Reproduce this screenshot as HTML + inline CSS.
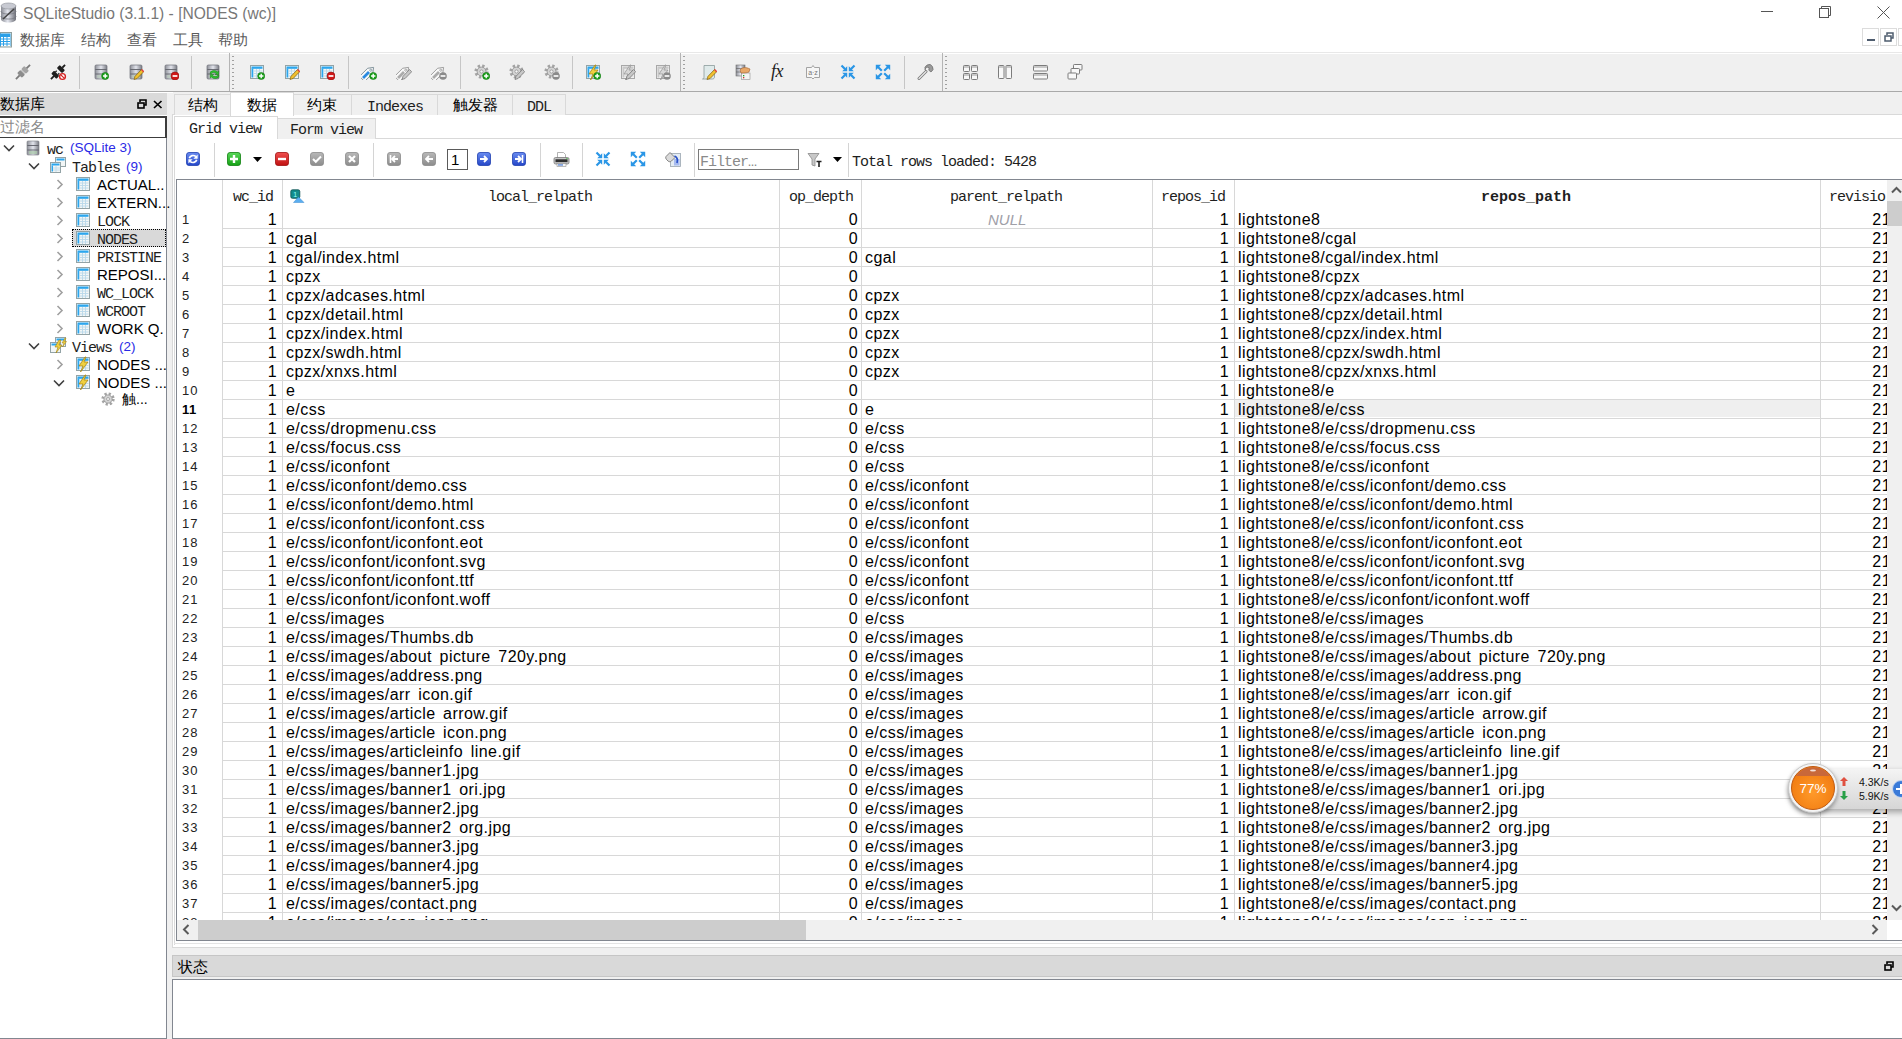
<!DOCTYPE html><html><head><meta charset="utf-8"><title>SQLiteStudio</title><style>
*{margin:0;padding:0;box-sizing:border-box}
html,body{width:1902px;height:1039px;overflow:hidden;background:#fff;position:relative}
body{font-family:"Liberation Sans",sans-serif;color:#000}
.a{position:absolute}
.s{position:absolute;font-family:"Liberation Sans",sans-serif;white-space:pre;line-height:19px}
.d,.r{font-size:16px;letter-spacing:.45px}
.r{width:300px;text-align:right;margin-right:-.45px}
.d i{display:inline-block;width:7.6px}
.m{position:absolute;font-family:"Liberation Mono",monospace;font-size:15px;letter-spacing:-1px;white-space:pre;line-height:19px;color:#1e1e1e}
.hl{position:absolute;height:1px}
.vl{position:absolute;width:1px}
svg{position:absolute;overflow:visible}
</style></head><body><svg width="0" height="0" style="position:absolute;left:0;top:0"><defs>
<linearGradient id="gdb" x1="0" x2="1"><stop offset="0" stop-color="#8e9098"/><stop offset=".5" stop-color="#e2e4ec"/><stop offset="1" stop-color="#7a7c84"/></linearGradient>
<linearGradient id="gbl" x1="0" y1="0" x2="0" y2="1"><stop offset="0" stop-color="#6a8cf0"/><stop offset="1" stop-color="#2446c8"/></linearGradient>
<linearGradient id="ggr" x1="0" y1="0" x2="0" y2="1"><stop offset="0" stop-color="#5ad85a"/><stop offset="1" stop-color="#14a014"/></linearGradient>
<linearGradient id="grd" x1="0" y1="0" x2="0" y2="1"><stop offset="0" stop-color="#f05050"/><stop offset="1" stop-color="#c01010"/></linearGradient>
<linearGradient id="ggy" x1="0" y1="0" x2="0" y2="1"><stop offset="0" stop-color="#b8b8b8"/><stop offset="1" stop-color="#8c8c8c"/></linearGradient>
<symbol id="db" viewBox="0 0 16 16"><rect x="2" y="1" width="12" height="14" rx="1.2" fill="url(#gdb)" stroke="#6e7078" stroke-width=".7"/><path d="M2.3 5.5h11.4M2.3 10h11.4" stroke="#60626a" stroke-width=".9"/><rect x="4" y="11" width="8" height="3" fill="#b6c8b8" opacity=".7"/></symbol>
<symbol id="bplus" viewBox="0 0 16 16"><circle cx="12.2" cy="12" r="3.6" fill="#1aa01a" stroke="#0c700c" stroke-width=".5"/><path d="M12.2 9.8v4.4M10 12h4.4" stroke="#fff" stroke-width="1.4"/></symbol>
<symbol id="bminus" viewBox="0 0 16 16"><circle cx="12" cy="12" r="4" fill="#d01818" stroke="#901010" stroke-width=".6"/><path d="M9.6 12h4.8" stroke="#fff" stroke-width="1.7"/></symbol>
<symbol id="bminusg" viewBox="0 0 16 16"><circle cx="12" cy="12" r="3.8" fill="#8a8a8a"/><path d="M9.6 12h4.8" stroke="#fff" stroke-width="1.6"/></symbol>
<symbol id="bpen" viewBox="0 0 16 16"><path d="M6 15.5l1-3.2 6.5-6.8 2.2 2.2-6.6 6.8z" fill="#f0c030" stroke="#806010" stroke-width=".7"/><path d="M13.5 5.5l2.2 2.2" stroke="#e04040" stroke-width="1.4"/></symbol>
<symbol id="bpeng" viewBox="0 0 16 16"><path d="M6 15.5l1-3.2 6.5-6.8 2.2 2.2-6.6 6.8z" fill="#c8c8c8" stroke="#707070" stroke-width=".7"/></symbol>
<symbol id="tbl" viewBox="0 0 16 16"><rect x="1.5" y="1.5" width="13" height="13" fill="#f2f6f6" stroke="#93a3a6"/><rect x="2.5" y="2.5" width="11" height="2.3" fill="#2ba6ee"/><rect x="2.5" y="4.5" width="1.8" height="9" fill="#2ba6ee"/><path d="M4.5 7h9M4.5 9.5h9M4.5 12h9M7.5 5v9M10.5 5v9" stroke="#b9d8ea" stroke-width=".9"/></symbol>
<symbol id="tblg" viewBox="0 0 16 16"><rect x="1.5" y="1.5" width="13" height="13" fill="#f0f0f0" stroke="#a8a8a8"/><rect x="2.5" y="2.5" width="11" height="2.3" fill="#c8c8c8"/><rect x="2.5" y="4.5" width="1.8" height="9" fill="#c8c8c8"/><path d="M4.5 7h9M4.5 9.5h9M4.5 12h9M7.5 5v9M10.5 5v9" stroke="#d6d6d6" stroke-width=".9"/></symbol>
<symbol id="tag" viewBox="0 0 16 16"><g transform="rotate(-45 8 8)"><path d="M-1.8 4.4h11.5l4.8 3.6-4.8 3.6H-1.8z" fill="#f8f8f8" stroke="#7e9098" stroke-width=".9"/><circle cx="10.6" cy="8" r="1.1" fill="none" stroke="#7e9098" stroke-width=".8"/><rect x="-.4" y="6.6" width="8.4" height="2.8" fill="#2a8ae0"/></g></symbol>
<symbol id="tagg" viewBox="0 0 16 16"><g transform="rotate(-45 8 8)"><path d="M-1.8 4.4h11.5l4.8 3.6-4.8 3.6H-1.8z" fill="#f8f8f8" stroke="#9a9a9a" stroke-width=".9"/><circle cx="10.6" cy="8" r="1.1" fill="none" stroke="#9a9a9a" stroke-width=".8"/><rect x="-.4" y="6.6" width="8.4" height="2.8" fill="#ababab"/></g></symbol>
<symbol id="gear" viewBox="0 0 16 16"><circle cx="7.5" cy="7.5" r="5.6" fill="none" stroke="#a4a4a4" stroke-width="3" stroke-dasharray="2.3 2.1"/><circle cx="7.5" cy="7.5" r="4.4" fill="#d4d4d4" stroke="#8e8e8e" stroke-width=".8"/><circle cx="7.5" cy="7.5" r="1.6" fill="#f6f6f6" stroke="#8a8a8a" stroke-width=".7"/></symbol>
<symbol id="bolt" viewBox="0 0 16 16"><path d="M10 1L4 10h4l-2.5 6L13 6H9l2-5z" fill="#f0d040" stroke="#a08010" stroke-width=".7"/></symbol>
<symbol id="boltg" viewBox="0 0 16 16"><path d="M10 1L4 10h4l-2.5 6L13 6H9l2-5z" fill="#d8d8d8" stroke="#909090" stroke-width=".7"/></symbol>
<symbol id="arrin" viewBox="0 0 16 16"><path d="M1.5 1.5L5 5M14.5 1.5L11 5M1.5 14.5L5 11M14.5 14.5L11 11" stroke="#2a96e6" stroke-width="2.2"/><path d="M7.2 7.2V2.2L2.2 7.2zM8.8 7.2V2.2l5 5zM7.2 8.8v5l-5-5zM8.8 8.8v5l5-5z" fill="#2a96e6"/></symbol>
<symbol id="arrout" viewBox="0 0 16 16"><path d="M3 3L6.8 6.8M13 3L9.2 6.8M3 13L6.8 9.2M13 13L9.2 9.2" stroke="#2a96e6" stroke-width="2.2"/><path d="M.8 .8h5.4L.8 6.2zM15.2 .8H9.8l5.4 5.4zM.8 15.2h5.4L.8 9.8zM15.2 15.2H9.8l5.4-5.4z" fill="#2a96e6"/></symbol>
<symbol id="win" viewBox="0 0 16 16"><rect x=".5" y=".5" width="6.5" height="6" rx=".8" fill="#f8f8f8" stroke="#7c7c7c"/></symbol>
</defs></svg><svg style="left:0px;top:2px" width="17" height="21" viewBox="0 0 17 21"><defs><linearGradient id="cyl" x1="0" x2="1"><stop offset="0" stop-color="#8a8c94"/><stop offset=".45" stop-color="#e4e6ee"/><stop offset="1" stop-color="#6c6e76"/></linearGradient></defs><path d="M1 4v13c0 2 3 3.5 7.5 3.5S16 19 16 17V4z" fill="url(#cyl)"/><ellipse cx="8.5" cy="4" rx="7.5" ry="3" fill="#c8cad2" stroke="#8c8e96" stroke-width=".6"/><path d="M1 9c0 2 3 3 7.5 3S16 11 16 9M1 14c0 2 3 3 7.5 3S16 16 16 14" fill="none" stroke="#777a82" stroke-width=".8"/><path d="M3 17L14 7" stroke="#444" stroke-width="1.6"/></svg><div class="s" style="left:23px;top:4px;font-size:15.6px;color:#777;">SQLiteStudio (3.1.1) - [NODES (wc)]</div><div class="hl" style="left:1761px;top:11px;width:12px;background:#555"></div><svg style="left:1818px;top:5px" width="14" height="14" viewBox="0 0 14 14"><rect x="1.5" y="3.5" width="9" height="9" fill="none" stroke="#555"/><path d="M3.5 3.5V1.5h9v9h-2" fill="none" stroke="#555"/></svg><svg style="left:1876px;top:5px" width="15" height="15" viewBox="0 0 15 15"><path d="M1.5 1.5l12 12M13.5 1.5l-12 12" stroke="#555" stroke-width="1"/></svg><svg style="left:0px;top:32px" width="13" height="16" viewBox="0 0 13 16"><rect x=".5" y=".5" width="11" height="14.5" fill="#e8f0f0" stroke="#8fa0a0"/><rect x="0" y="1.5" width="10.5" height="12.5" fill="#2aa0e8"/><path d="M1 5h2v1.5H1zM4 5h2.5v1.5H4zM7.5 5H10v1.5H7.5zM1 7.5h2V9H1zM4 7.5h2.5V9H4zM7.5 7.5H10V9H7.5zM1 10h2v1.5H1zM4 10h2.5v1.5H4zM7.5 10H10v1.5H7.5zM1 12.5h2V14H1zM4 12.5h2.5V14H4zM7.5 12.5H10V14H7.5z" fill="#fff"/></svg><div class="s" style="left:20px;top:30px;font-size:15px;color:#5a5a5a;">数据库</div><div class="s" style="left:81px;top:30px;font-size:15px;color:#5a5a5a;">结构</div><div class="s" style="left:127px;top:30px;font-size:15px;color:#5a5a5a;">查看</div><div class="s" style="left:173px;top:30px;font-size:15px;color:#5a5a5a;">工具</div><div class="s" style="left:218px;top:30px;font-size:15px;color:#5a5a5a;">帮助</div><div class="a" style="left:1862px;top:28px;width:17px;height:18px;border:1px solid #dcdcdc;background:#fff"></div><div class="a" style="left:1880px;top:28px;width:17px;height:18px;border:1px solid #dcdcdc;background:#fff"></div><div class="a" style="left:1898px;top:28px;width:6px;height:18px;border:1px solid #dcdcdc;background:#fff"></div><div class="a" style="left:1867px;top:39px;width:8px;height:2px;background:#4e5c6e"></div><svg style="left:1884px;top:32px" width="10" height="10" viewBox="0 0 10 10"><rect x="1" y="4" width="6" height="5" fill="none" stroke="#4e5c6e" stroke-width="1.5"/><path d="M3 3V1h6v5H7" fill="none" stroke="#4e5c6e" stroke-width="1.5"/></svg><div class="hl" style="left:0px;top:52px;width:1902px;background:#e8e8e8"></div><div class="a" style="left:0px;top:54px;width:1902px;height:37px;background:#f0f0f0"></div><div class="hl" style="left:0px;top:91px;width:1902px;background:#a9a9a9"></div><div class="vl" style="left:79px;top:56px;height:33px;background:#c6c6c6"></div><div class="vl" style="left:191px;top:56px;height:33px;background:#c6c6c6"></div><div class="vl" style="left:348px;top:56px;height:33px;background:#c6c6c6"></div><div class="vl" style="left:460px;top:56px;height:33px;background:#c6c6c6"></div><div class="vl" style="left:572px;top:56px;height:33px;background:#c6c6c6"></div><div class="vl" style="left:904px;top:56px;height:33px;background:#c6c6c6"></div><div class="vl" style="left:229px;top:53px;height:38px;background:#b4b4b4"></div><div class="a" style="left:232px;top:56px;width:2px;height:33px;background:repeating-linear-gradient(#a0a0a0 0 1px,#f0f0f0 1px 4px)"></div><div class="vl" style="left:680px;top:53px;height:38px;background:#b4b4b4"></div><div class="a" style="left:683px;top:56px;width:2px;height:33px;background:repeating-linear-gradient(#a0a0a0 0 1px,#f0f0f0 1px 4px)"></div><div class="vl" style="left:942px;top:53px;height:38px;background:#b4b4b4"></div><div class="a" style="left:945px;top:56px;width:2px;height:33px;background:repeating-linear-gradient(#a0a0a0 0 1px,#f0f0f0 1px 4px)"></div><svg style="left:15px;top:64px" width="16" height="16" viewBox="0 0 16 16"><g transform="rotate(-45 8 8)"><rect x="-2" y="7.1" width="5.5" height="1.8" fill="#7a7a7a"/><rect x="3" y="4.6" width="4.6" height="6.8" rx="1.2" fill="#8c8c8c"/><rect x="7.6" y="5.4" width="1.2" height="5.2" fill="#c4c4c4"/><rect x="8.8" y="4.6" width="4.4" height="6.8" rx="1.2" fill="#a4a4a4"/><rect x="13" y="7.1" width="5" height="1.8" fill="#7a7a7a"/></g></svg><svg style="left:50px;top:64px" width="16" height="16" viewBox="0 0 16 16"><g transform="rotate(-45 8 8)" fill="#1e1e1e"><rect x="-2" y="7.1" width="4.5" height="1.8"/><rect x="2" y="4.3" width="4.2" height="7.4" rx="1"/><rect x="6" y="5.6" width="2" height="1.2"/><rect x="6" y="9.2" width="2" height="1.2"/><rect x="10" y="4.3" width="4.2" height="7.4" rx="1"/><rect x="14" y="7.1" width="4" height="1.8"/></g><circle cx="12.5" cy="12.5" r="2.9" fill="#fff" stroke="#d42020" stroke-width="1.4"/><path d="M10.6 10.6l3.8 3.8" stroke="#d42020" stroke-width="1.3"/></svg><svg style="left:93px;top:64px" width="16" height="16" viewBox="0 0 16 16"><use href="#db"/><use href="#bplus"/></svg><svg style="left:128px;top:64px" width="16" height="16" viewBox="0 0 16 16"><use href="#db"/><use href="#bpen"/></svg><svg style="left:163px;top:64px" width="16" height="16" viewBox="0 0 16 16"><use href="#db"/><use href="#bminus"/></svg><svg style="left:205px;top:64px" width="16" height="16" viewBox="0 0 16 16"><use href="#db"/><path d="M5 9.5a4 3 0 0 1 7.5-1.5l1.2-1v3.5h-3.5l1.2-1A2.8 2 0 0 0 6.5 9.5z" fill="#30c030" stroke="#108010" stroke-width=".5"/><path d="M14 11.5a4 3 0 0 1-7.5 1.5l-1.2 1v-3.5h3.5l-1.2 1a2.8 2 0 0 0 5 0z" fill="#30c030" stroke="#108010" stroke-width=".5"/></svg><svg style="left:249px;top:64px" width="16" height="16" viewBox="0 0 16 16"><use href="#tbl"/><use href="#bplus"/></svg><svg style="left:284px;top:64px" width="16" height="16" viewBox="0 0 16 16"><use href="#tbl"/><use href="#bpen"/></svg><svg style="left:319px;top:64px" width="16" height="16" viewBox="0 0 16 16"><use href="#tbl"/><use href="#bminus"/></svg><svg style="left:361px;top:64px" width="16" height="16" viewBox="0 0 16 16"><use href="#tag"/><use href="#bplus"/></svg><svg style="left:396px;top:64px" width="16" height="16" viewBox="0 0 16 16"><use href="#tagg"/><use href="#bpeng"/></svg><svg style="left:431px;top:64px" width="16" height="16" viewBox="0 0 16 16"><use href="#tagg"/><use href="#bminusg"/></svg><svg style="left:474px;top:64px" width="16" height="16" viewBox="0 0 16 16"><use href="#gear"/><use href="#bplus"/></svg><svg style="left:509px;top:64px" width="16" height="16" viewBox="0 0 16 16"><use href="#gear"/><use href="#bpeng"/></svg><svg style="left:544px;top:64px" width="16" height="16" viewBox="0 0 16 16"><use href="#gear"/><use href="#bminusg"/></svg><svg style="left:585px;top:64px" width="16" height="16" viewBox="0 0 16 16"><use href="#tbl"/><use href="#bolt"/><use href="#bplus"/></svg><svg style="left:620px;top:64px" width="16" height="16" viewBox="0 0 16 16"><use href="#tblg"/><use href="#boltg"/><use href="#bpeng"/></svg><svg style="left:655px;top:64px" width="16" height="16" viewBox="0 0 16 16"><use href="#tblg"/><use href="#boltg"/><use href="#bminusg"/></svg><svg style="left:701px;top:64px" width="16" height="16" viewBox="0 0 16 16"><path d="M3 1.5h10.5v11.5c0 1.2-.8 2-2 2H1.5c1 0 1.5-.8 1.5-2z" fill="#dfeaea" stroke="#8a9a9a" stroke-width=".8"/><use href="#bpen"/></svg><svg style="left:735px;top:64px" width="16" height="16" viewBox="0 0 16 16"><rect x="1" y="1" width="9" height="11" fill="url(#gdb)" stroke="#707070" stroke-width=".6"/><path d="M1 4.5h9M1 8h9" stroke="#666" stroke-width=".7"/><rect x="6.5" y="9" width="8.5" height="6.5" fill="#f4f4f4" stroke="#909090" stroke-width=".6"/><path d="M5 6c2-3 6-3 10-1l-1 3c-2 1-5 1-8 1z" fill="#e8a868" stroke="#a06030" stroke-width=".6"/><rect x="8" y="11" width="1.3" height="1.3" fill="#20a020"/><rect x="8" y="13" width="1.3" height="1.3" fill="#d03030"/></svg><div class="a" style="left:771px;top:61px;font:italic 18px &quot;Liberation Serif&quot;,serif;color:#222;letter-spacing:-.5px;line-height:20px">fx</div><svg style="left:805px;top:64px" width="16" height="16" viewBox="0 0 16 16"><path d="M1.5 3.5h5l1.5-2 1.5 2h5v10h-5L8 15l-1.5-1.5h-5z" fill="#f6f6f6" stroke="#9a9a9a" stroke-width=".9"/><text x="8" y="11" font-family="Liberation Sans" font-size="7" text-anchor="middle" fill="#777">a·z</text></svg><svg style="left:840px;top:64px" width="16" height="16" viewBox="0 0 16 16"><use href="#arrin"/></svg><svg style="left:875px;top:64px" width="16" height="16" viewBox="0 0 16 16"><use href="#arrout"/></svg><svg style="left:917px;top:64px" width="16" height="16" viewBox="0 0 16 16"><path d="M2 14.5L9 7.5" stroke="#7a7a7a" stroke-width="3" stroke-linecap="round"/><path d="M2 14.5L9 7.5" stroke="#e8e8e8" stroke-width="1.2" stroke-linecap="round"/><path d="M8.5 6.5a4 4 0 1 1 5.5 1.5l-2.2-1.8.3-2.5-2.3-.7-1.8 2.3z" fill="#9a9a9a" stroke="#6a6a6a" stroke-width=".7"/></svg><svg style="left:962px;top:64px" width="16" height="16" viewBox="0 0 16 16"><rect x="1.5" y="1.5" width="6" height="6" rx=".8" fill="#f8f8f8" stroke="#7c7c7c"/><rect x="9.5" y="1.5" width="6" height="6" rx=".8" fill="#f8f8f8" stroke="#7c7c7c"/><rect x="1.5" y="9.5" width="6" height="6" rx=".8" fill="#f8f8f8" stroke="#7c7c7c"/><rect x="9.5" y="9.5" width="6" height="6" rx=".8" fill="#f8f8f8" stroke="#7c7c7c"/><path d="M2 3h5M10 3h5M2 11h5M10 11h5" stroke="#9a9a9a"/></svg><svg style="left:997px;top:64px" width="16" height="16" viewBox="0 0 16 16"><rect x="1.5" y="1.5" width="5.5" height="13" rx=".8" fill="#f8f8f8" stroke="#7c7c7c"/><rect x="9" y="1.5" width="5.5" height="13" rx=".8" fill="#f8f8f8" stroke="#7c7c7c"/><path d="M2 3h4.5M9.5 3H14" stroke="#9a9a9a"/></svg><svg style="left:1032px;top:64px" width="16" height="16" viewBox="0 0 16 16"><rect x="1.5" y="1.5" width="14" height="5.5" rx=".8" fill="#f8f8f8" stroke="#7c7c7c"/><rect x="1.5" y="9.5" width="14" height="5.5" rx=".8" fill="#f8f8f8" stroke="#7c7c7c"/><path d="M2 3h13M2 11h13" stroke="#9a9a9a"/></svg><svg style="left:1067px;top:64px" width="16" height="16" viewBox="0 0 16 16"><rect x="6.5" y=".5" width="8.5" height="5.5" rx=".8" fill="#f8f8f8" stroke="#7c7c7c"/><rect x="4" y="4.5" width="8.5" height="5.5" rx=".8" fill="#f8f8f8" stroke="#7c7c7c"/><rect x="1" y="9" width="8.5" height="6" rx=".8" fill="#f8f8f8" stroke="#7c7c7c"/></svg><div class="a" style="left:0px;top:93px;width:167px;height:22px;background:#dadada"></div><div class="s" style="left:0px;top:94px;font-size:15px;color:#000;">数据库</div><svg style="left:137px;top:99px" width="9" height="10" viewBox="0 0 9 10"><rect x="1" y="4" width="6" height="5" fill="none" stroke="#000" stroke-width="1.6"/><path d="M3 3V1h6v5H7" fill="none" stroke="#000" stroke-width="1.6"/></svg><svg style="left:153px;top:100px" width="10" height="9" viewBox="0 0 10 9"><path d="M1 1l7.5 7M8.5 1L1 8" stroke="#000" stroke-width="1.7"/></svg><div class="a" style="left:0px;top:116px;width:167px;height:23px;border:2px solid #3c3c3c;border-left:none;background:#fff"></div><div class="s" style="left:0px;top:117px;font-size:15px;color:#8a8a8a;">过滤名</div><div class="a" style="left:0px;top:138px;width:167px;height:901px;border-right:1px solid #828790;border-bottom:1px solid #828790;background:#fff"></div><div class="a" style="left:167px;top:93px;width:6px;height:946px;background:#f0f0f0"></div><svg style="left:3px;top:144px" width="12" height="8" viewBox="0 0 12 8"><path d="M1 1.5l5 5 5-5" fill="none" stroke="#404040" stroke-width="1.6"/></svg><svg style="left:26px;top:140px" width="14" height="16" viewBox="0 0 14 16"><rect x="1" y="1" width="12" height="14" rx="1" fill="url(#gdb)" stroke="#7a7c84" stroke-width=".6"/><path d="M1.3 5.5h11.4M1.3 10h11.4" stroke="#5c5e66" stroke-width=".9"/><rect x="3" y="11" width="8" height="3" fill="#a8c8a8" opacity=".7"/></svg><div class="m" style="left:47px;top:141px;color:#1e1e1e;">wc</div><div class="s" style="left:70px;top:138px;font-size:13.5px;color:#2a2ae6">(SQLite 3)</div><svg style="left:28px;top:162px" width="12" height="8" viewBox="0 0 12 8"><path d="M1 1.5l5 5 5-5" fill="none" stroke="#404040" stroke-width="1.6"/></svg><svg style="left:50px;top:157px" width="17" height="16" viewBox="0 0 17 16"><rect x="5.5" y=".5" width="10" height="9" fill="#f2f6f6" stroke="#93a3a6"/><rect x="6.5" y="1.5" width="8" height="2" fill="#2ba6ee"/><rect x=".5" y="5.5" width="10" height="10" fill="#f2f6f6" stroke="#93a3a6"/><rect x="1.5" y="6.5" width="8" height="2" fill="#2ba6ee"/><rect x="1.5" y="8.5" width="1.5" height="6" fill="#2ba6ee"/><path d="M3 11h7M3 13h7M6 9v6" stroke="#b9d8ea" stroke-width=".8"/></svg><div class="m" style="left:72px;top:159px;color:#1e1e1e;">Tables</div><div class="s" style="left:126px;top:157px;font-size:13.5px;color:#2a2ae6">(9)</div><svg style="left:56px;top:179px" width="8" height="11" viewBox="0 0 8 11"><path d="M1.5 1l4.5 4.5L1.5 10" fill="none" stroke="#a0a0a0" stroke-width="1.6"/></svg><svg style="left:75px;top:176px" width="16" height="16" viewBox="0 0 16 16"><use href="#tbl"/></svg><div class="s" style="left:97px;top:175px;font-size:15px;color:#000">ACTUAL..</div><svg style="left:56px;top:197px" width="8" height="11" viewBox="0 0 8 11"><path d="M1.5 1l4.5 4.5L1.5 10" fill="none" stroke="#a0a0a0" stroke-width="1.6"/></svg><svg style="left:75px;top:194px" width="16" height="16" viewBox="0 0 16 16"><use href="#tbl"/></svg><div class="s" style="left:97px;top:193px;font-size:15px;color:#000">EXTERN...</div><svg style="left:56px;top:215px" width="8" height="11" viewBox="0 0 8 11"><path d="M1.5 1l4.5 4.5L1.5 10" fill="none" stroke="#a0a0a0" stroke-width="1.6"/></svg><svg style="left:75px;top:212px" width="16" height="16" viewBox="0 0 16 16"><use href="#tbl"/></svg><div class="m" style="left:97px;top:213px;color:#1e1e1e;">LOCK</div><div class="a" style="left:72px;top:229px;width:94px;height:18px;background:#d9d9d9;outline:1px dotted #000;outline-offset:-1px"></div><svg style="left:56px;top:233px" width="8" height="11" viewBox="0 0 8 11"><path d="M1.5 1l4.5 4.5L1.5 10" fill="none" stroke="#a0a0a0" stroke-width="1.6"/></svg><svg style="left:75px;top:230px" width="16" height="16" viewBox="0 0 16 16"><use href="#tbl"/></svg><div class="m" style="left:97px;top:231px;color:#1e1e1e;">NODES</div><svg style="left:56px;top:251px" width="8" height="11" viewBox="0 0 8 11"><path d="M1.5 1l4.5 4.5L1.5 10" fill="none" stroke="#a0a0a0" stroke-width="1.6"/></svg><svg style="left:75px;top:248px" width="16" height="16" viewBox="0 0 16 16"><use href="#tbl"/></svg><div class="m" style="left:97px;top:249px;color:#1e1e1e;">PRISTINE</div><svg style="left:56px;top:269px" width="8" height="11" viewBox="0 0 8 11"><path d="M1.5 1l4.5 4.5L1.5 10" fill="none" stroke="#a0a0a0" stroke-width="1.6"/></svg><svg style="left:75px;top:266px" width="16" height="16" viewBox="0 0 16 16"><use href="#tbl"/></svg><div class="s" style="left:97px;top:265px;font-size:15px;color:#000">REPOSI...</div><svg style="left:56px;top:287px" width="8" height="11" viewBox="0 0 8 11"><path d="M1.5 1l4.5 4.5L1.5 10" fill="none" stroke="#a0a0a0" stroke-width="1.6"/></svg><svg style="left:75px;top:284px" width="16" height="16" viewBox="0 0 16 16"><use href="#tbl"/></svg><div class="m" style="left:97px;top:285px;color:#1e1e1e;">WC_LOCK</div><svg style="left:56px;top:305px" width="8" height="11" viewBox="0 0 8 11"><path d="M1.5 1l4.5 4.5L1.5 10" fill="none" stroke="#a0a0a0" stroke-width="1.6"/></svg><svg style="left:75px;top:302px" width="16" height="16" viewBox="0 0 16 16"><use href="#tbl"/></svg><div class="m" style="left:97px;top:303px;color:#1e1e1e;">WCROOT</div><svg style="left:56px;top:323px" width="8" height="11" viewBox="0 0 8 11"><path d="M1.5 1l4.5 4.5L1.5 10" fill="none" stroke="#a0a0a0" stroke-width="1.6"/></svg><svg style="left:75px;top:320px" width="16" height="16" viewBox="0 0 16 16"><use href="#tbl"/></svg><div class="s" style="left:97px;top:319px;font-size:15px;color:#000">WORK Q.</div><svg style="left:28px;top:342px" width="12" height="8" viewBox="0 0 12 8"><path d="M1 1.5l5 5 5-5" fill="none" stroke="#404040" stroke-width="1.6"/></svg><svg style="left:50px;top:337px" width="17" height="17" viewBox="0 0 17 17"><rect x="5.5" y=".5" width="10" height="9" fill="#f2f6f6" stroke="#93a3a6"/><rect x="6.5" y="1.5" width="8" height="2" fill="#2ba6ee"/><rect x=".5" y="5.5" width="10" height="10" fill="#f2f6f6" stroke="#93a3a6"/><rect x="1.5" y="6.5" width="8" height="2" fill="#2ba6ee"/><path d="M9 3L5 10h3l-2 6 6-8H9l2-5z" fill="#f0d040" stroke="#a08010" stroke-width=".6"/><path d="M15 1l-3 5h2l-1.5 4 4-5.5h-2l1.5-3.5z" fill="#f0d040" stroke="#a08010" stroke-width=".5"/></svg><div class="m" style="left:72px;top:339px;color:#1e1e1e;">Views</div><div class="s" style="left:119px;top:337px;font-size:13.5px;color:#2a2ae6">(2)</div><svg style="left:56px;top:359px" width="8" height="11" viewBox="0 0 8 11"><path d="M1.5 1l4.5 4.5L1.5 10" fill="none" stroke="#a0a0a0" stroke-width="1.6"/></svg><svg style="left:75px;top:356px" width="16" height="16" viewBox="0 0 16 16"><use href="#tbl"/><use href="#bolt"/></svg><div class="s" style="left:97px;top:355px;font-size:15px;color:#000">NODES ...</div><svg style="left:53px;top:379px" width="12" height="8" viewBox="0 0 12 8"><path d="M1 1.5l5 5 5-5" fill="none" stroke="#404040" stroke-width="1.6"/></svg><svg style="left:75px;top:374px" width="16" height="16" viewBox="0 0 16 16"><use href="#tbl"/><use href="#bolt"/></svg><div class="s" style="left:97px;top:373px;font-size:15px;color:#000">NODES ...</div><svg style="left:101px;top:392px" width="15" height="15" viewBox="0 0 16 16"><use href="#gear"/></svg><div class="s" style="left:122px;top:390px;font-size:14px;color:#000;">触...</div><div class="a" style="left:173px;top:92px;width:1729px;height:23px;background:#f0f0f0"></div><div class="a" style="left:172px;top:114px;width:1740px;height:834px;border:1px solid #d9d9d9;background:#fff"></div><div class="a" style="left:174px;top:94px;width:57px;height:21px;border:1px solid #d9d9d9;border-bottom:none;background:#f0f0f0"></div><div class="a" style="left:293px;top:94px;width:59px;height:21px;border:1px solid #d9d9d9;border-bottom:none;background:#f0f0f0"></div><div class="a" style="left:351px;top:94px;width:87px;height:21px;border:1px solid #d9d9d9;border-bottom:none;background:#f0f0f0"></div><div class="a" style="left:437px;top:94px;width:76px;height:21px;border:1px solid #d9d9d9;border-bottom:none;background:#f0f0f0"></div><div class="a" style="left:512px;top:94px;width:54px;height:21px;border:1px solid #d9d9d9;border-bottom:none;background:#f0f0f0"></div><div class="a" style="left:230px;top:92px;width:64px;height:24px;border:1px solid #d9d9d9;border-bottom:none;background:#fff"></div><div class="s" style="left:188px;top:95px;font-size:15px;color:#000;">结构</div><div class="s" style="left:247px;top:95px;font-size:15px;color:#000;">数据</div><div class="s" style="left:307px;top:95px;font-size:15px;color:#000;">约束</div><div class="m" style="left:367px;top:98px;color:#1e1e1e;">Indexes</div><div class="s" style="left:453px;top:95px;font-size:15px;color:#000;">触发器</div><div class="m" style="left:527px;top:98px;color:#1e1e1e;">DDL</div><div class="a" style="left:174px;top:138px;width:1730px;height:1px;background:#d9d9d9"></div><div class="a" style="left:277px;top:118px;width:99px;height:21px;border:1px solid #d9d9d9;border-bottom:none;background:#f0f0f0"></div><div class="a" style="left:174px;top:116px;width:104px;height:23px;border:1px solid #d9d9d9;border-bottom:none;background:#fff"></div><div class="m" style="left:189px;top:120px;color:#1e1e1e;">Grid view</div><div class="m" style="left:290px;top:121px;color:#1e1e1e;">Form view</div><div class="a" style="left:174px;top:139px;width:1730px;height:806px;border-left:1px solid #d9d9d9;background:#fff"></div><div class="vl" style="left:214px;top:143px;height:34px;background:#d4d4d4"></div><div class="vl" style="left:373px;top:143px;height:34px;background:#d4d4d4"></div><div class="vl" style="left:540px;top:143px;height:34px;background:#d4d4d4"></div><div class="vl" style="left:582px;top:143px;height:34px;background:#d4d4d4"></div><div class="vl" style="left:694px;top:143px;height:34px;background:#d4d4d4"></div><div class="vl" style="left:848px;top:143px;height:34px;background:#d4d4d4"></div><svg style="left:186px;top:152px" width="14" height="14" viewBox="0 0 14 14"><rect x=".5" y=".5" width="13" height="13" rx="2.5" fill="url(#gbl)" stroke="#2040b0" stroke-width=".8"/><path d="M3.3 6.3A3.9 3.6 0 0 1 9.9 4.6" stroke="#fff" stroke-width="1.7" fill="none"/><path d="M11.6 2.6v4.2H7.4z" fill="#fff"/><path d="M10.7 7.7A3.9 3.6 0 0 1 4.1 9.4" stroke="#fff" stroke-width="1.7" fill="none"/><path d="M2.4 11.4V7.2h4.2z" fill="#fff"/></svg><svg style="left:227px;top:152px" width="14" height="14" viewBox="0 0 14 14"><rect x=".5" y=".5" width="13" height="13" rx="2.5" fill="url(#ggr)" stroke="#108010" stroke-width=".8"/><path d="M7 3v8M3 7h8" stroke="#fff" stroke-width="2.4"/></svg><svg style="left:253px;top:157px" width="10" height="6" viewBox="0 0 10 6"><path d="M0 0h9L4.5 5z" fill="#000"/></svg><svg style="left:275px;top:152px" width="14" height="14" viewBox="0 0 14 14"><rect x=".5" y=".5" width="13" height="13" rx="2.5" fill="url(#grd)" stroke="#a01010" stroke-width=".8"/><path d="M3 7h8" stroke="#fff" stroke-width="2.4"/></svg><svg style="left:310px;top:152px" width="14" height="14" viewBox="0 0 14 14"><rect x=".5" y=".5" width="13" height="13" rx="2.5" fill="url(#ggy)" stroke="#8a8a8a" stroke-width=".8"/><path d="M3 7l2.8 2.8L11 4.5" fill="none" stroke="#fff" stroke-width="2"/></svg><svg style="left:345px;top:152px" width="14" height="14" viewBox="0 0 14 14"><rect x=".5" y=".5" width="13" height="13" rx="2.5" fill="url(#ggy)" stroke="#8a8a8a" stroke-width=".8"/><path d="M4 4l6 6M10 4l-6 6" stroke="#fff" stroke-width="2.2"/></svg><svg style="left:387px;top:152px" width="14" height="14" viewBox="0 0 14 14"><rect x=".5" y=".5" width="13" height="13" rx="2.5" fill="url(#ggy)" stroke="#8a8a8a" stroke-width=".8"/><path d="M3.5 3v8" stroke="#fff" stroke-width="1.6"/><path d="M11 7H6M8 4L5 7l3 3" fill="none" stroke="#fff" stroke-width="1.8"/></svg><svg style="left:422px;top:152px" width="14" height="14" viewBox="0 0 14 14"><rect x=".5" y=".5" width="13" height="13" rx="2.5" fill="url(#ggy)" stroke="#8a8a8a" stroke-width=".8"/><path d="M11 7H4M7 4L4 7l3 3" fill="none" stroke="#fff" stroke-width="1.8"/></svg><div class="a" style="left:447px;top:149px;width:21px;height:21px;border:1px solid #5a5a5a;background:#fff"></div><div class="s" style="left:451px;top:150px;font-size:15px;color:#000;">1</div><svg style="left:477px;top:152px" width="14" height="14" viewBox="0 0 14 14"><rect x=".5" y=".5" width="13" height="13" rx="2.5" fill="url(#gbl)" stroke="#2040b0" stroke-width=".8"/><path d="M3 7h7M7 4l3 3-3 3" fill="none" stroke="#fff" stroke-width="1.8"/></svg><svg style="left:512px;top:152px" width="14" height="14" viewBox="0 0 14 14"><rect x=".5" y=".5" width="13" height="13" rx="2.5" fill="url(#gbl)" stroke="#2040b0" stroke-width=".8"/><path d="M10.5 3v8" stroke="#fff" stroke-width="1.6"/><path d="M3 7h5M6 4l3 3-3 3" fill="none" stroke="#fff" stroke-width="1.8"/></svg><svg style="left:553px;top:151px" width="17" height="17" viewBox="0 0 17 17"><path d="M4.5 1.5h6l2 2v4h-8z" fill="#fff" stroke="#a0a0a0" stroke-width=".8"/><rect x="1" y="6.5" width="15" height="6.5" rx="1.5" fill="#c4c4c4" stroke="#7a7a7a" stroke-width=".8"/><rect x="2.5" y="8.3" width="12" height="2.8" fill="#2e2e2e"/><rect x="4" y="12.5" width="9" height="3" fill="#f4f4f4" stroke="#909090" stroke-width=".6"/><rect x="5" y="13.4" width="5" height="1.1" fill="#3a70d0"/><circle cx="14" cy="7.6" r=".7" fill="#30c030"/></svg><svg style="left:595px;top:151px" width="16" height="16" viewBox="0 0 16 16"><use href="#arrin"/></svg><svg style="left:630px;top:151px" width="16" height="16" viewBox="0 0 16 16"><use href="#arrout"/></svg><svg style="left:665px;top:151px" width="16" height="16" viewBox="0 0 16 16"><rect x="5.5" y="2.5" width="10" height="13" fill="#e4ecf4" stroke="#9aa6b0" stroke-width=".8"/><rect x="9" y="8" width="5.5" height="6.5" fill="#a8bcf0"/><path d="M1 5.5l4-4 5 5-3.5 3.5c-1 1-2.5 1-3.5 0L1.5 8.5C.7 7.7.5 6.3 1 5.5z" fill="#dadada" stroke="#6a6a6a" stroke-width=".8"/><path d="M9.5 5c2.5 1 3.5 3.5 2.5 7" fill="none" stroke="#2850c8" stroke-width="1.7"/></svg><div class="a" style="left:698px;top:149px;width:101px;height:21px;border:1px solid #7a7a7a;background:#fff"></div><div class="m" style="left:700px;top:153px;color:#8a8a8a;">Filter…</div><svg style="left:807px;top:152px" width="16" height="16" viewBox="0 0 16 16"><path d="M1 1.5h11L8 7v7l-3-1V7z" fill="#c8c8c8" stroke="#8a8a8a" stroke-width=".8"/><path d="M9.5 9.5h5M12 9.5v5.5" stroke="#222" stroke-width="1.6"/></svg><svg style="left:833px;top:157px" width="10" height="6" viewBox="0 0 10 6"><path d="M0 0h9L4.5 5z" fill="#000"/></svg><div class="m" style="left:852px;top:153px;color:#1e1e1e;">Total rows loaded: 5428</div><div class="a" style="left:176px;top:179px;width:1740px;height:762px;border:1px solid #828790;background:#fff"></div><div class="a" style="left:177px;top:180px;width:1710px;height:740px;overflow:hidden"><div class="a" style="left:1058px;top:219px;width:585px;height:18px;background:#efefef"></div><div class="hl" style="left:45px;top:48px;width:1700px;background:#d8d8d8"></div><div class="hl" style="left:45px;top:67px;width:1700px;background:#d8d8d8"></div><div class="hl" style="left:45px;top:86px;width:1700px;background:#d8d8d8"></div><div class="hl" style="left:45px;top:105px;width:1700px;background:#d8d8d8"></div><div class="hl" style="left:45px;top:124px;width:1700px;background:#d8d8d8"></div><div class="hl" style="left:45px;top:143px;width:1700px;background:#d8d8d8"></div><div class="hl" style="left:45px;top:162px;width:1700px;background:#d8d8d8"></div><div class="hl" style="left:45px;top:181px;width:1700px;background:#d8d8d8"></div><div class="hl" style="left:45px;top:200px;width:1700px;background:#d8d8d8"></div><div class="hl" style="left:45px;top:219px;width:1700px;background:#d8d8d8"></div><div class="hl" style="left:45px;top:238px;width:1700px;background:#d8d8d8"></div><div class="hl" style="left:45px;top:257px;width:1700px;background:#d8d8d8"></div><div class="hl" style="left:45px;top:276px;width:1700px;background:#d8d8d8"></div><div class="hl" style="left:45px;top:295px;width:1700px;background:#d8d8d8"></div><div class="hl" style="left:45px;top:314px;width:1700px;background:#d8d8d8"></div><div class="hl" style="left:45px;top:333px;width:1700px;background:#d8d8d8"></div><div class="hl" style="left:45px;top:352px;width:1700px;background:#d8d8d8"></div><div class="hl" style="left:45px;top:371px;width:1700px;background:#d8d8d8"></div><div class="hl" style="left:45px;top:390px;width:1700px;background:#d8d8d8"></div><div class="hl" style="left:45px;top:409px;width:1700px;background:#d8d8d8"></div><div class="hl" style="left:45px;top:428px;width:1700px;background:#d8d8d8"></div><div class="hl" style="left:45px;top:447px;width:1700px;background:#d8d8d8"></div><div class="hl" style="left:45px;top:466px;width:1700px;background:#d8d8d8"></div><div class="hl" style="left:45px;top:485px;width:1700px;background:#d8d8d8"></div><div class="hl" style="left:45px;top:504px;width:1700px;background:#d8d8d8"></div><div class="hl" style="left:45px;top:523px;width:1700px;background:#d8d8d8"></div><div class="hl" style="left:45px;top:542px;width:1700px;background:#d8d8d8"></div><div class="hl" style="left:45px;top:561px;width:1700px;background:#d8d8d8"></div><div class="hl" style="left:45px;top:580px;width:1700px;background:#d8d8d8"></div><div class="hl" style="left:45px;top:599px;width:1700px;background:#d8d8d8"></div><div class="hl" style="left:45px;top:618px;width:1700px;background:#d8d8d8"></div><div class="hl" style="left:45px;top:637px;width:1700px;background:#d8d8d8"></div><div class="hl" style="left:45px;top:656px;width:1700px;background:#d8d8d8"></div><div class="hl" style="left:45px;top:675px;width:1700px;background:#d8d8d8"></div><div class="hl" style="left:45px;top:694px;width:1700px;background:#d8d8d8"></div><div class="hl" style="left:45px;top:713px;width:1700px;background:#d8d8d8"></div><div class="hl" style="left:45px;top:732px;width:1700px;background:#d8d8d8"></div><div class="hl" style="left:45px;top:751px;width:1700px;background:#d8d8d8"></div><div class="vl" style="left:45px;top:0px;height:740px;background:#d8d8d8"></div><div class="vl" style="left:105px;top:0px;height:740px;background:#d8d8d8"></div><div class="vl" style="left:602px;top:0px;height:740px;background:#d8d8d8"></div><div class="vl" style="left:684px;top:0px;height:740px;background:#d8d8d8"></div><div class="vl" style="left:975px;top:0px;height:740px;background:#d8d8d8"></div><div class="vl" style="left:1057px;top:0px;height:740px;background:#d8d8d8"></div><div class="vl" style="left:1643px;top:0px;height:740px;background:#d8d8d8"></div><div class="m" style="left:56px;top:8px;">wc_id</div><div class="m" style="left:311px;top:8px;">local_relpath</div><div class="m" style="left:612px;top:8px;">op_depth</div><div class="m" style="left:773px;top:8px;">parent_relpath</div><div class="m" style="left:984px;top:8px;">repos_id</div><div class="m" style="left:1304px;top:8px;font-weight:bold;letter-spacing:0;">repos_path</div><div class="m" style="left:1652px;top:8px;">revisio</div><svg style="left:113px;top:9px" width="15" height="14" viewBox="0 0 15 14"><rect x=".8" y=".8" width="9" height="8.5" rx="1.6" fill="#138c8c" stroke="#0a4e4e" stroke-width=".8"/><text x="5.3" y="7.6" font-size="7" font-family="Liberation Sans" fill="#9ff" text-anchor="middle">1</text><path d="M3.5 13.5L8.5 8l5.5 5.5z" fill="#5aaef0" stroke="#3a8ad0" stroke-width=".5"/></svg><div class="s" style="left:5px;top:30px;font-size:13px;color:#222;letter-spacing:1px">1</div><div class="s r" style="left:-200px;top:30px;">1</div><div class="s r" style="left:381px;top:30px;">0</div><div class="s d" style="left:811px;top:30px;font-size:15px;letter-spacing:0;color:#a0a0a8;font-style:italic">NULL</div><div class="s r" style="left:752px;top:30px;">1</div><div class="s d" style="left:1061px;top:30px;">lightstone8</div><div class="s r" style="left:1414px;top:30px;">21</div><div class="s" style="left:5px;top:49px;font-size:13px;color:#222;letter-spacing:1px">2</div><div class="s r" style="left:-200px;top:49px;">1</div><div class="s d" style="left:109px;top:49px;">cgal</div><div class="s r" style="left:381px;top:49px;">0</div><div class="s r" style="left:752px;top:49px;">1</div><div class="s d" style="left:1061px;top:49px;">lightstone8/cgal</div><div class="s r" style="left:1414px;top:49px;">21</div><div class="s" style="left:5px;top:68px;font-size:13px;color:#222;letter-spacing:1px">3</div><div class="s r" style="left:-200px;top:68px;">1</div><div class="s d" style="left:109px;top:68px;">cgal/index.html</div><div class="s r" style="left:381px;top:68px;">0</div><div class="s d" style="left:688px;top:68px;">cgal</div><div class="s r" style="left:752px;top:68px;">1</div><div class="s d" style="left:1061px;top:68px;">lightstone8/cgal/index.html</div><div class="s r" style="left:1414px;top:68px;">21</div><div class="s" style="left:5px;top:87px;font-size:13px;color:#222;letter-spacing:1px">4</div><div class="s r" style="left:-200px;top:87px;">1</div><div class="s d" style="left:109px;top:87px;">cpzx</div><div class="s r" style="left:381px;top:87px;">0</div><div class="s r" style="left:752px;top:87px;">1</div><div class="s d" style="left:1061px;top:87px;">lightstone8/cpzx</div><div class="s r" style="left:1414px;top:87px;">21</div><div class="s" style="left:5px;top:106px;font-size:13px;color:#222;letter-spacing:1px">5</div><div class="s r" style="left:-200px;top:106px;">1</div><div class="s d" style="left:109px;top:106px;">cpzx/adcases.html</div><div class="s r" style="left:381px;top:106px;">0</div><div class="s d" style="left:688px;top:106px;">cpzx</div><div class="s r" style="left:752px;top:106px;">1</div><div class="s d" style="left:1061px;top:106px;">lightstone8/cpzx/adcases.html</div><div class="s r" style="left:1414px;top:106px;">21</div><div class="s" style="left:5px;top:125px;font-size:13px;color:#222;letter-spacing:1px">6</div><div class="s r" style="left:-200px;top:125px;">1</div><div class="s d" style="left:109px;top:125px;">cpzx/detail.html</div><div class="s r" style="left:381px;top:125px;">0</div><div class="s d" style="left:688px;top:125px;">cpzx</div><div class="s r" style="left:752px;top:125px;">1</div><div class="s d" style="left:1061px;top:125px;">lightstone8/cpzx/detail.html</div><div class="s r" style="left:1414px;top:125px;">21</div><div class="s" style="left:5px;top:144px;font-size:13px;color:#222;letter-spacing:1px">7</div><div class="s r" style="left:-200px;top:144px;">1</div><div class="s d" style="left:109px;top:144px;">cpzx/index.html</div><div class="s r" style="left:381px;top:144px;">0</div><div class="s d" style="left:688px;top:144px;">cpzx</div><div class="s r" style="left:752px;top:144px;">1</div><div class="s d" style="left:1061px;top:144px;">lightstone8/cpzx/index.html</div><div class="s r" style="left:1414px;top:144px;">21</div><div class="s" style="left:5px;top:163px;font-size:13px;color:#222;letter-spacing:1px">8</div><div class="s r" style="left:-200px;top:163px;">1</div><div class="s d" style="left:109px;top:163px;">cpzx/swdh.html</div><div class="s r" style="left:381px;top:163px;">0</div><div class="s d" style="left:688px;top:163px;">cpzx</div><div class="s r" style="left:752px;top:163px;">1</div><div class="s d" style="left:1061px;top:163px;">lightstone8/cpzx/swdh.html</div><div class="s r" style="left:1414px;top:163px;">21</div><div class="s" style="left:5px;top:182px;font-size:13px;color:#222;letter-spacing:1px">9</div><div class="s r" style="left:-200px;top:182px;">1</div><div class="s d" style="left:109px;top:182px;">cpzx/xnxs.html</div><div class="s r" style="left:381px;top:182px;">0</div><div class="s d" style="left:688px;top:182px;">cpzx</div><div class="s r" style="left:752px;top:182px;">1</div><div class="s d" style="left:1061px;top:182px;">lightstone8/cpzx/xnxs.html</div><div class="s r" style="left:1414px;top:182px;">21</div><div class="s" style="left:5px;top:201px;font-size:13px;color:#222;letter-spacing:1px">10</div><div class="s r" style="left:-200px;top:201px;">1</div><div class="s d" style="left:109px;top:201px;">e</div><div class="s r" style="left:381px;top:201px;">0</div><div class="s r" style="left:752px;top:201px;">1</div><div class="s d" style="left:1061px;top:201px;">lightstone8/e</div><div class="s r" style="left:1414px;top:201px;">21</div><div class="s" style="left:5px;top:220px;font-size:13px;font-weight:bold;letter-spacing:.6px">11</div><div class="s r" style="left:-200px;top:220px;">1</div><div class="s d" style="left:109px;top:220px;">e/css</div><div class="s r" style="left:381px;top:220px;">0</div><div class="s d" style="left:688px;top:220px;">e</div><div class="s r" style="left:752px;top:220px;">1</div><div class="s d" style="left:1061px;top:220px;">lightstone8/e/css</div><div class="s r" style="left:1414px;top:220px;">21</div><div class="s" style="left:5px;top:239px;font-size:13px;color:#222;letter-spacing:1px">12</div><div class="s r" style="left:-200px;top:239px;">1</div><div class="s d" style="left:109px;top:239px;">e/css/dropmenu.css</div><div class="s r" style="left:381px;top:239px;">0</div><div class="s d" style="left:688px;top:239px;">e/css</div><div class="s r" style="left:752px;top:239px;">1</div><div class="s d" style="left:1061px;top:239px;">lightstone8/e/css/dropmenu.css</div><div class="s r" style="left:1414px;top:239px;">21</div><div class="s" style="left:5px;top:258px;font-size:13px;color:#222;letter-spacing:1px">13</div><div class="s r" style="left:-200px;top:258px;">1</div><div class="s d" style="left:109px;top:258px;">e/css/focus.css</div><div class="s r" style="left:381px;top:258px;">0</div><div class="s d" style="left:688px;top:258px;">e/css</div><div class="s r" style="left:752px;top:258px;">1</div><div class="s d" style="left:1061px;top:258px;">lightstone8/e/css/focus.css</div><div class="s r" style="left:1414px;top:258px;">21</div><div class="s" style="left:5px;top:277px;font-size:13px;color:#222;letter-spacing:1px">14</div><div class="s r" style="left:-200px;top:277px;">1</div><div class="s d" style="left:109px;top:277px;">e/css/iconfont</div><div class="s r" style="left:381px;top:277px;">0</div><div class="s d" style="left:688px;top:277px;">e/css</div><div class="s r" style="left:752px;top:277px;">1</div><div class="s d" style="left:1061px;top:277px;">lightstone8/e/css/iconfont</div><div class="s r" style="left:1414px;top:277px;">21</div><div class="s" style="left:5px;top:296px;font-size:13px;color:#222;letter-spacing:1px">15</div><div class="s r" style="left:-200px;top:296px;">1</div><div class="s d" style="left:109px;top:296px;">e/css/iconfont/demo.css</div><div class="s r" style="left:381px;top:296px;">0</div><div class="s d" style="left:688px;top:296px;">e/css/iconfont</div><div class="s r" style="left:752px;top:296px;">1</div><div class="s d" style="left:1061px;top:296px;">lightstone8/e/css/iconfont/demo.css</div><div class="s r" style="left:1414px;top:296px;">21</div><div class="s" style="left:5px;top:315px;font-size:13px;color:#222;letter-spacing:1px">16</div><div class="s r" style="left:-200px;top:315px;">1</div><div class="s d" style="left:109px;top:315px;">e/css/iconfont/demo.html</div><div class="s r" style="left:381px;top:315px;">0</div><div class="s d" style="left:688px;top:315px;">e/css/iconfont</div><div class="s r" style="left:752px;top:315px;">1</div><div class="s d" style="left:1061px;top:315px;">lightstone8/e/css/iconfont/demo.html</div><div class="s r" style="left:1414px;top:315px;">21</div><div class="s" style="left:5px;top:334px;font-size:13px;color:#222;letter-spacing:1px">17</div><div class="s r" style="left:-200px;top:334px;">1</div><div class="s d" style="left:109px;top:334px;">e/css/iconfont/iconfont.css</div><div class="s r" style="left:381px;top:334px;">0</div><div class="s d" style="left:688px;top:334px;">e/css/iconfont</div><div class="s r" style="left:752px;top:334px;">1</div><div class="s d" style="left:1061px;top:334px;">lightstone8/e/css/iconfont/iconfont.css</div><div class="s r" style="left:1414px;top:334px;">21</div><div class="s" style="left:5px;top:353px;font-size:13px;color:#222;letter-spacing:1px">18</div><div class="s r" style="left:-200px;top:353px;">1</div><div class="s d" style="left:109px;top:353px;">e/css/iconfont/iconfont.eot</div><div class="s r" style="left:381px;top:353px;">0</div><div class="s d" style="left:688px;top:353px;">e/css/iconfont</div><div class="s r" style="left:752px;top:353px;">1</div><div class="s d" style="left:1061px;top:353px;">lightstone8/e/css/iconfont/iconfont.eot</div><div class="s r" style="left:1414px;top:353px;">21</div><div class="s" style="left:5px;top:372px;font-size:13px;color:#222;letter-spacing:1px">19</div><div class="s r" style="left:-200px;top:372px;">1</div><div class="s d" style="left:109px;top:372px;">e/css/iconfont/iconfont.svg</div><div class="s r" style="left:381px;top:372px;">0</div><div class="s d" style="left:688px;top:372px;">e/css/iconfont</div><div class="s r" style="left:752px;top:372px;">1</div><div class="s d" style="left:1061px;top:372px;">lightstone8/e/css/iconfont/iconfont.svg</div><div class="s r" style="left:1414px;top:372px;">21</div><div class="s" style="left:5px;top:391px;font-size:13px;color:#222;letter-spacing:1px">20</div><div class="s r" style="left:-200px;top:391px;">1</div><div class="s d" style="left:109px;top:391px;">e/css/iconfont/iconfont.ttf</div><div class="s r" style="left:381px;top:391px;">0</div><div class="s d" style="left:688px;top:391px;">e/css/iconfont</div><div class="s r" style="left:752px;top:391px;">1</div><div class="s d" style="left:1061px;top:391px;">lightstone8/e/css/iconfont/iconfont.ttf</div><div class="s r" style="left:1414px;top:391px;">21</div><div class="s" style="left:5px;top:410px;font-size:13px;color:#222;letter-spacing:1px">21</div><div class="s r" style="left:-200px;top:410px;">1</div><div class="s d" style="left:109px;top:410px;">e/css/iconfont/iconfont.woff</div><div class="s r" style="left:381px;top:410px;">0</div><div class="s d" style="left:688px;top:410px;">e/css/iconfont</div><div class="s r" style="left:752px;top:410px;">1</div><div class="s d" style="left:1061px;top:410px;">lightstone8/e/css/iconfont/iconfont.woff</div><div class="s r" style="left:1414px;top:410px;">21</div><div class="s" style="left:5px;top:429px;font-size:13px;color:#222;letter-spacing:1px">22</div><div class="s r" style="left:-200px;top:429px;">1</div><div class="s d" style="left:109px;top:429px;">e/css/images</div><div class="s r" style="left:381px;top:429px;">0</div><div class="s d" style="left:688px;top:429px;">e/css</div><div class="s r" style="left:752px;top:429px;">1</div><div class="s d" style="left:1061px;top:429px;">lightstone8/e/css/images</div><div class="s r" style="left:1414px;top:429px;">21</div><div class="s" style="left:5px;top:448px;font-size:13px;color:#222;letter-spacing:1px">23</div><div class="s r" style="left:-200px;top:448px;">1</div><div class="s d" style="left:109px;top:448px;">e/css/images/Thumbs.db</div><div class="s r" style="left:381px;top:448px;">0</div><div class="s d" style="left:688px;top:448px;">e/css/images</div><div class="s r" style="left:752px;top:448px;">1</div><div class="s d" style="left:1061px;top:448px;">lightstone8/e/css/images/Thumbs.db</div><div class="s r" style="left:1414px;top:448px;">21</div><div class="s" style="left:5px;top:467px;font-size:13px;color:#222;letter-spacing:1px">24</div><div class="s r" style="left:-200px;top:467px;">1</div><div class="s d" style="left:109px;top:467px;">e/css/images/about<i></i>picture<i></i>720y.png</div><div class="s r" style="left:381px;top:467px;">0</div><div class="s d" style="left:688px;top:467px;">e/css/images</div><div class="s r" style="left:752px;top:467px;">1</div><div class="s d" style="left:1061px;top:467px;">lightstone8/e/css/images/about<i></i>picture<i></i>720y.png</div><div class="s r" style="left:1414px;top:467px;">21</div><div class="s" style="left:5px;top:486px;font-size:13px;color:#222;letter-spacing:1px">25</div><div class="s r" style="left:-200px;top:486px;">1</div><div class="s d" style="left:109px;top:486px;">e/css/images/address.png</div><div class="s r" style="left:381px;top:486px;">0</div><div class="s d" style="left:688px;top:486px;">e/css/images</div><div class="s r" style="left:752px;top:486px;">1</div><div class="s d" style="left:1061px;top:486px;">lightstone8/e/css/images/address.png</div><div class="s r" style="left:1414px;top:486px;">21</div><div class="s" style="left:5px;top:505px;font-size:13px;color:#222;letter-spacing:1px">26</div><div class="s r" style="left:-200px;top:505px;">1</div><div class="s d" style="left:109px;top:505px;">e/css/images/arr<i></i>icon.gif</div><div class="s r" style="left:381px;top:505px;">0</div><div class="s d" style="left:688px;top:505px;">e/css/images</div><div class="s r" style="left:752px;top:505px;">1</div><div class="s d" style="left:1061px;top:505px;">lightstone8/e/css/images/arr<i></i>icon.gif</div><div class="s r" style="left:1414px;top:505px;">21</div><div class="s" style="left:5px;top:524px;font-size:13px;color:#222;letter-spacing:1px">27</div><div class="s r" style="left:-200px;top:524px;">1</div><div class="s d" style="left:109px;top:524px;">e/css/images/article<i></i>arrow.gif</div><div class="s r" style="left:381px;top:524px;">0</div><div class="s d" style="left:688px;top:524px;">e/css/images</div><div class="s r" style="left:752px;top:524px;">1</div><div class="s d" style="left:1061px;top:524px;">lightstone8/e/css/images/article<i></i>arrow.gif</div><div class="s r" style="left:1414px;top:524px;">21</div><div class="s" style="left:5px;top:543px;font-size:13px;color:#222;letter-spacing:1px">28</div><div class="s r" style="left:-200px;top:543px;">1</div><div class="s d" style="left:109px;top:543px;">e/css/images/article<i></i>icon.png</div><div class="s r" style="left:381px;top:543px;">0</div><div class="s d" style="left:688px;top:543px;">e/css/images</div><div class="s r" style="left:752px;top:543px;">1</div><div class="s d" style="left:1061px;top:543px;">lightstone8/e/css/images/article<i></i>icon.png</div><div class="s r" style="left:1414px;top:543px;">21</div><div class="s" style="left:5px;top:562px;font-size:13px;color:#222;letter-spacing:1px">29</div><div class="s r" style="left:-200px;top:562px;">1</div><div class="s d" style="left:109px;top:562px;">e/css/images/articleinfo<i></i>line.gif</div><div class="s r" style="left:381px;top:562px;">0</div><div class="s d" style="left:688px;top:562px;">e/css/images</div><div class="s r" style="left:752px;top:562px;">1</div><div class="s d" style="left:1061px;top:562px;">lightstone8/e/css/images/articleinfo<i></i>line.gif</div><div class="s r" style="left:1414px;top:562px;">21</div><div class="s" style="left:5px;top:581px;font-size:13px;color:#222;letter-spacing:1px">30</div><div class="s r" style="left:-200px;top:581px;">1</div><div class="s d" style="left:109px;top:581px;">e/css/images/banner1.jpg</div><div class="s r" style="left:381px;top:581px;">0</div><div class="s d" style="left:688px;top:581px;">e/css/images</div><div class="s r" style="left:752px;top:581px;">1</div><div class="s d" style="left:1061px;top:581px;">lightstone8/e/css/images/banner1.jpg</div><div class="s r" style="left:1414px;top:581px;">21</div><div class="s" style="left:5px;top:600px;font-size:13px;color:#222;letter-spacing:1px">31</div><div class="s r" style="left:-200px;top:600px;">1</div><div class="s d" style="left:109px;top:600px;">e/css/images/banner1<i></i>ori.jpg</div><div class="s r" style="left:381px;top:600px;">0</div><div class="s d" style="left:688px;top:600px;">e/css/images</div><div class="s r" style="left:752px;top:600px;">1</div><div class="s d" style="left:1061px;top:600px;">lightstone8/e/css/images/banner1<i></i>ori.jpg</div><div class="s r" style="left:1414px;top:600px;">21</div><div class="s" style="left:5px;top:619px;font-size:13px;color:#222;letter-spacing:1px">32</div><div class="s r" style="left:-200px;top:619px;">1</div><div class="s d" style="left:109px;top:619px;">e/css/images/banner2.jpg</div><div class="s r" style="left:381px;top:619px;">0</div><div class="s d" style="left:688px;top:619px;">e/css/images</div><div class="s r" style="left:752px;top:619px;">1</div><div class="s d" style="left:1061px;top:619px;">lightstone8/e/css/images/banner2.jpg</div><div class="s r" style="left:1414px;top:619px;">21</div><div class="s" style="left:5px;top:638px;font-size:13px;color:#222;letter-spacing:1px">33</div><div class="s r" style="left:-200px;top:638px;">1</div><div class="s d" style="left:109px;top:638px;">e/css/images/banner2<i></i>org.jpg</div><div class="s r" style="left:381px;top:638px;">0</div><div class="s d" style="left:688px;top:638px;">e/css/images</div><div class="s r" style="left:752px;top:638px;">1</div><div class="s d" style="left:1061px;top:638px;">lightstone8/e/css/images/banner2<i></i>org.jpg</div><div class="s r" style="left:1414px;top:638px;">21</div><div class="s" style="left:5px;top:657px;font-size:13px;color:#222;letter-spacing:1px">34</div><div class="s r" style="left:-200px;top:657px;">1</div><div class="s d" style="left:109px;top:657px;">e/css/images/banner3.jpg</div><div class="s r" style="left:381px;top:657px;">0</div><div class="s d" style="left:688px;top:657px;">e/css/images</div><div class="s r" style="left:752px;top:657px;">1</div><div class="s d" style="left:1061px;top:657px;">lightstone8/e/css/images/banner3.jpg</div><div class="s r" style="left:1414px;top:657px;">21</div><div class="s" style="left:5px;top:676px;font-size:13px;color:#222;letter-spacing:1px">35</div><div class="s r" style="left:-200px;top:676px;">1</div><div class="s d" style="left:109px;top:676px;">e/css/images/banner4.jpg</div><div class="s r" style="left:381px;top:676px;">0</div><div class="s d" style="left:688px;top:676px;">e/css/images</div><div class="s r" style="left:752px;top:676px;">1</div><div class="s d" style="left:1061px;top:676px;">lightstone8/e/css/images/banner4.jpg</div><div class="s r" style="left:1414px;top:676px;">21</div><div class="s" style="left:5px;top:695px;font-size:13px;color:#222;letter-spacing:1px">36</div><div class="s r" style="left:-200px;top:695px;">1</div><div class="s d" style="left:109px;top:695px;">e/css/images/banner5.jpg</div><div class="s r" style="left:381px;top:695px;">0</div><div class="s d" style="left:688px;top:695px;">e/css/images</div><div class="s r" style="left:752px;top:695px;">1</div><div class="s d" style="left:1061px;top:695px;">lightstone8/e/css/images/banner5.jpg</div><div class="s r" style="left:1414px;top:695px;">21</div><div class="s" style="left:5px;top:714px;font-size:13px;color:#222;letter-spacing:1px">37</div><div class="s r" style="left:-200px;top:714px;">1</div><div class="s d" style="left:109px;top:714px;">e/css/images/contact.png</div><div class="s r" style="left:381px;top:714px;">0</div><div class="s d" style="left:688px;top:714px;">e/css/images</div><div class="s r" style="left:752px;top:714px;">1</div><div class="s d" style="left:1061px;top:714px;">lightstone8/e/css/images/contact.png</div><div class="s r" style="left:1414px;top:714px;">21</div><div class="s" style="left:5px;top:733px;font-size:13px;color:#222;letter-spacing:1px">38</div><div class="s r" style="left:-200px;top:733px;">1</div><div class="s d" style="left:109px;top:733px;">e/css/images/con<i></i>icon.png</div><div class="s r" style="left:381px;top:733px;">0</div><div class="s d" style="left:688px;top:733px;">e/css/images</div><div class="s r" style="left:752px;top:733px;">1</div><div class="s d" style="left:1061px;top:733px;">lightstone8/e/css/images/con<i></i>icon.png</div><div class="s r" style="left:1414px;top:733px;">21</div></div><div class="a" style="left:1887px;top:180px;width:15px;height:740px;background:#f0f0f0"></div><div class="a" style="left:1887px;top:201px;width:15px;height:25px;background:#cdcdcd"></div><svg style="left:1891px;top:186px" width="11" height="8" viewBox="0 0 11 8"><path d="M1 6.5L5.5 2 10 6.5" fill="none" stroke="#5a5a5a" stroke-width="2"/></svg><svg style="left:1891px;top:904px" width="11" height="8" viewBox="0 0 11 8"><path d="M1 1.5L5.5 6 10 1.5" fill="none" stroke="#5a5a5a" stroke-width="2"/></svg><div class="a" style="left:177px;top:920px;width:1710px;height:20px;background:#f0f0f0"></div><div class="a" style="left:198px;top:920px;width:608px;height:20px;background:#cdcdcd"></div><svg style="left:182px;top:924px" width="8" height="11" viewBox="0 0 8 11"><path d="M6.5 1L2 5.5 6.5 10" fill="none" stroke="#5a5a5a" stroke-width="2"/></svg><svg style="left:1871px;top:924px" width="8" height="11" viewBox="0 0 8 11"><path d="M1.5 1L6 5.5 1.5 10" fill="none" stroke="#5a5a5a" stroke-width="2"/></svg><div class="a" style="left:176px;top:940px;width:1726px;height:1px;background:#828790"></div><div class="a" style="left:167px;top:948px;width:1735px;height:31px;background:#f0f0f0"></div><div class="a" style="left:174px;top:943px;width:1730px;height:1px;background:#e4e4e4"></div><div class="a" style="left:172px;top:955px;width:1740px;height:22px;background:#d9d9d9;border:1px solid #c6c6c6"></div><div class="s" style="left:178px;top:957px;font-size:15px;color:#000;">状态</div><svg style="left:1884px;top:961px" width="10" height="10" viewBox="0 0 10 10"><rect x="1" y="4" width="6" height="5" fill="none" stroke="#000" stroke-width="1.6"/><path d="M3 3V1h6v5H7" fill="none" stroke="#000" stroke-width="1.6"/></svg><div class="a" style="left:172px;top:979px;width:1740px;height:60px;border:1px solid #828790;background:#fff"></div><div class="a" style="left:1790px;top:769px;width:140px;height:40px;border-radius:20px;background:linear-gradient(#f4f4f4,#d6d6d6);box-shadow:0 3px 6px rgba(0,0,0,.35)"></div><svg style="left:1840px;top:777px" width="8" height="9" viewBox="0 0 8 9"><path d="M4 0L0 4h2.5v5h3V4H8z" fill="#e05040"/></svg><svg style="left:1840px;top:791px" width="8" height="9" viewBox="0 0 8 9"><path d="M4 9L0 5h2.5V0h3v5H8z" fill="#28a048"/></svg><div class="s" style="left:1859px;top:775px;font-size:10.5px;color:#111;line-height:14px">4.3K/s</div><div class="s" style="left:1859px;top:789px;font-size:10.5px;color:#111;line-height:14px">5.9K/s</div><svg style="left:1892px;top:780px" width="18" height="18" viewBox="0 0 18 18"><circle cx="9" cy="9" r="8.5" fill="#3a7ad8" stroke="#c8d8f0"/><path d="M9 4v10M4 9h10" stroke="#fff" stroke-width="2"/></svg><svg style="left:1786px;top:761px" width="54" height="54" viewBox="0 0 54 54"><defs><radialGradient id="ball" cx=".5" cy=".6" r=".6"><stop offset="0" stop-color="#ff9a2a"/><stop offset="1" stop-color="#f07a10"/></radialGradient><filter id="sh" x="-30%" y="-30%" width="160%" height="160%"><feGaussianBlur stdDeviation="2"/></filter></defs><circle cx="27" cy="29" r="25" fill="rgba(0,0,0,.35)" filter="url(#sh)"/><circle cx="27" cy="27" r="24.5" fill="#f4f4f4" stroke="#c8c8c8"/><circle cx="27" cy="27" r="21.5" fill="url(#ball)" stroke="#c05a10" stroke-width="1"/><path d="M10 15A21 21 0 0 1 44 15z" fill="#c8683a"/><ellipse cx="27" cy="9.5" rx="3" ry="1" fill="#fff" opacity=".8"/><text x="27" y="32" font-family="Liberation Sans" font-size="13.5" fill="#fff" text-anchor="middle">77%</text></svg></body></html>
